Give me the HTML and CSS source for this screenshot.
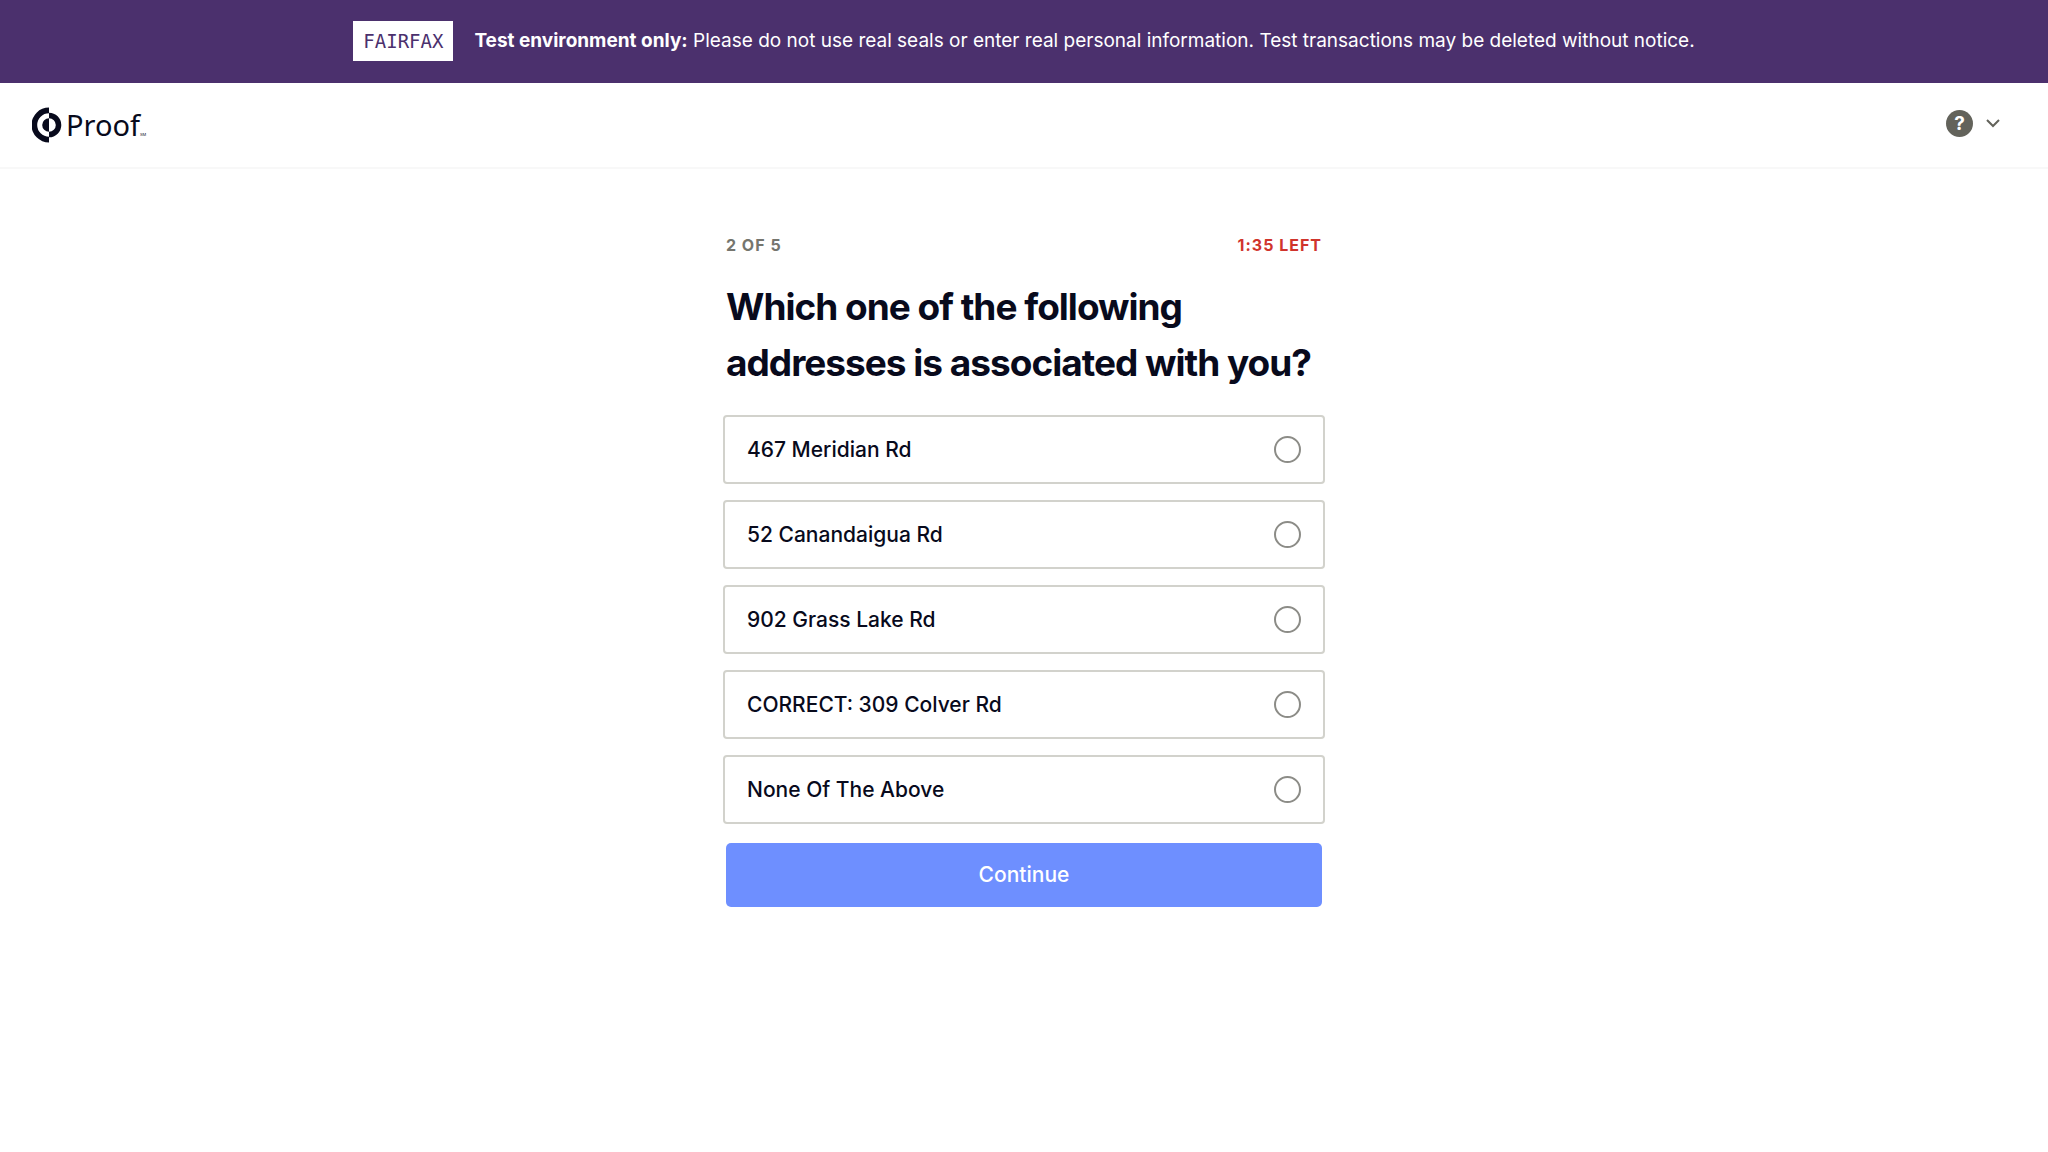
FILE: index.html
```html
<!DOCTYPE html>
<html lang="en">
<head>
<meta charset="utf-8">
<meta name="viewport" content="width=device-width, initial-scale=1">
<title>Proof</title>
<link rel="stylesheet" href="styles.css">
</head>
<body>
<aside class="banner">
  <span class="banner-badge">FAIRFAX</span>
  <p class="banner-text"><strong>Test environment only:</strong> Please do not use real seals or enter real personal information. Test transactions may be deleted without notice.</p>
</aside>
<header class="header">
  <a class="logo" href="#" aria-label="Proof">
    <svg class="logo-mark" viewBox="0 0 30 36" aria-hidden="true">
      <path d="M17 .5v5.700a11.800 11.800 0 0 0 0 23.600v5.700a17.500 17.500 0 0 1 0-35z"/>
      <path d="M17 11.200v13.600a6.800 6.800 0 0 1 0-13.600z"/>
      <path d="M17 5.700a12.300 12.300 0 0 1 0 24.600v-5.500a6.800 6.800 0 0 0 0-13.600z"/>
    </svg>
    <span class="logo-name">Proof</span><span class="logo-sm">SM</span>
  </a>
  <button class="help" type="button" aria-label="Help menu">
    <span class="help-icon">?</span>
    <svg class="help-chevron" viewBox="0 0 14 9" aria-hidden="true"><path d="M1 1l6 6 6-6"/></svg>
  </button>
</header>
<main class="main">
  <form class="quiz">
    <div class="status">
      <span>2 of 5</span>
      <span class="status-time">1:35 left</span>
    </div>
    <fieldset class="question">
      <legend class="question-title">Which one of the following addresses is associated with you?</legend>
      <div class="options">
        <label class="option">467 Meridian Rd<input class="option-radio" type="radio" name="address"></label>
        <label class="option">52 Canandaigua Rd<input class="option-radio" type="radio" name="address"></label>
        <label class="option">902 Grass Lake Rd<input class="option-radio" type="radio" name="address"></label>
        <label class="option">CORRECT: 309 Colver Rd<input class="option-radio" type="radio" name="address"></label>
        <label class="option">None Of The Above<input class="option-radio" type="radio" name="address"></label>
      </div>
    </fieldset>
    <button class="continue" type="submit">Continue</button>
  </form>
</main>
</body>
</html>
```

FILE: styles.css
```css
* {
  box-sizing: border-box;
}

body {
  margin: 0;
  background: #fff;
  color: #080a1c;
  font-family: Inter, "Liberation Sans", sans-serif;
}

.banner {
  display: flex;
  align-items: center;
  justify-content: center;
  gap: 21px;
  padding: 21px 21px 22px;
  background: #4b306d;
  color: #fff;
  font-size: 19px;
  line-height: 40px;
}

.banner-badge {
  padding: 0 10px;
  background: #fff;
  color: #4b306d;
  font-family: "DejaVu Sans Mono", monospace;
}

.banner-text {
  margin: 0;
}

.header {
  display: flex;
  align-items: center;
  justify-content: space-between;
  height: 86px;
  padding: 0 48px 0 32px;
  border-bottom: 2px solid #f8f8f8;
}

.logo {
  display: flex;
  align-items: center;
  color: #080a1c;
  text-decoration: none;
}

.logo-mark {
  width: 30px;
  height: 36px;
  fill: currentColor;
}

.logo-name {
  margin-left: 4px;
  font-family: "Noto Sans", sans-serif;
  font-size: 29px;
  line-height: 36px;
}

.logo-sm {
  align-self: flex-end;
  font-size: 4px;
  line-height: 16px;
}

.help {
  display: flex;
  align-items: center;
  gap: 13px;
  padding: 0 0 3px;
  border: 0;
  background: none;
  color: #63635b;
}

.help-icon {
  width: 27px;
  height: 27px;
  border-radius: 50%;
  background: #63635b;
  color: #fff;
  font: 700 19px/27px Inter, sans-serif;
  text-align: center;
}

.help-chevron {
  width: 14px;
  height: 9px;
  fill: none;
  stroke: currentColor;
  stroke-width: 2;
}

.main {
  padding: 64px 24px;
}

.quiz {
  max-width: 596px;
  margin: 0 auto;
}

.status {
  display: flex;
  justify-content: space-between;
  color: #75756e;
  font-size: 16px;
  font-weight: 700;
  line-height: 24px;
  letter-spacing: 1px;
  text-transform: uppercase;
}

.status-time {
  color: #d0342c;
}

.question {
  min-width: 0;
  margin: 0;
  padding: 0;
  border: 0;
}

.question-title {
  padding: 22px 0 24px;
  font-size: 37px;
  font-weight: 700;
  line-height: 56px;
  letter-spacing: -1px;
}

.options {
  display: grid;
  gap: 16px;
  margin: 0 -3px;
}

.option {
  display: flex;
  align-items: center;
  justify-content: space-between;
  padding: 19px 22px;
  border: 2px solid #d2d2cc;
  border-radius: 4px;
  font-size: 21px;
  font-weight: 500;
  line-height: 27px;
}

.option-radio {
  appearance: none;
  width: 27px;
  height: 27px;
  margin: 0;
  border: 2px solid #8c8c87;
  border-radius: 50%;
}

.option-radio:checked {
  border-width: 8px;
}

.continue {
  display: block;
  width: 100%;
  margin-top: 19px;
  padding: 16px;
  border: 0;
  border-radius: 5px;
  background: #6e8fff;
  color: #fff;
  font: 500 21px/32px Inter, sans-serif;
}
```
